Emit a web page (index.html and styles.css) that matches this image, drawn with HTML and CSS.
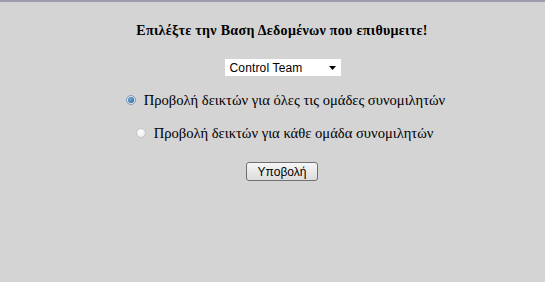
FILE: index.html
```html
<!DOCTYPE html>
<html>
<head>
<meta charset="utf-8">
<link rel="stylesheet" href="styles.css">
</head>
<body>
<div class="topline"></div>
<form class="page">
  <h3 class="title">Επιλέξτε την Βαση Δεδομένων που επιθυμειτε!</h3>
  <div class="select">
    <span class="select-text">Control Team</span>
    <svg class="arrow" width="7" height="4" viewBox="0 0 7 4"><path d="M0 0H7L3.5 4Z" fill="#000"/></svg>
  </div>
  <label class="option first">
    <span class="radio checked"><span class="dot"></span></span>
    <span class="opt-text">Προβολή δεικτών για όλες τις ομάδες συνομιλητών</span>
  </label>
  <label class="option second">
    <span class="radio"></span>
    <span class="opt-text">Προβολή δεικτών για κάθε ομάδα συνομιλητών</span>
  </label>
  <div class="button">Υποβολή</div>
</form>
</body>
</html>
```
FILE: styles.css
```css
html, body {
  margin: 0;
  padding: 0;
  background: #d4d4d4;
  height: 100%;
}
.topline {
  height: 2px;
  background: #9c9cae;
}
.page {
  display: flex;
  flex-direction: column;
  align-items: center;
  padding-left: 19px;
  font-family: "Liberation Serif", "DejaVu Serif", serif;
  color: #000;
}
.title {
  margin: 20px 0 0 0;
  font-size: 14px;
  font-weight: bold;
  line-height: 18px;
  letter-spacing: 0.3px;
}
.select {
  margin-top: 19px;
  width: 116px;
  height: 17px;
  background: #fff;
  display: flex;
  align-items: center;
  justify-content: space-between;
  box-sizing: border-box;
  padding: 0 5px 0 5px;
  margin-left: 1px;
}
.select-text {
  font-family: "Liberation Sans", Arial, sans-serif;
  font-size: 12px;
  letter-spacing: 0.15px;
  color: #000;
}
.arrow {
  display: block;
}
.option {
  display: flex;
  align-items: center;
  font-size: 14.6px;
  line-height: 18px;
}
.option.first {
  margin-top: 15px;
  margin-left: 7px;
}
.option.second {
  margin-top: 15px;
  margin-left: 5px;
}
.opt-text {
  margin-left: 8px;
}
.radio {
  width: 10px;
  height: 10px;
  box-sizing: border-box;
  border-radius: 50%;
  background: radial-gradient(circle at 40% 40%, #ffffff, #e6e6e6);
  border: 1px solid #c6c6c6;
  display: flex;
  align-items: center;
  justify-content: center;
}
.radio.checked {
  border-color: #7d98b8;
  background: #dfe8f2;
}
.dot {
  width: 6px;
  height: 6px;
  border-radius: 50%;
  background: radial-gradient(circle at 40% 40%, #78acd9, #1b4f86);
}
.button {
  margin-top: 20px;
  width: 72px;
  height: 19px;
  box-sizing: border-box;
  border: 1px solid #707070;
  border-radius: 3px;
  background: linear-gradient(#f6f6f6, #dcdcdc);
  font-family: "Liberation Sans", Arial, sans-serif;
  font-size: 12px;
  display: flex;
  align-items: center;
  justify-content: center;
}
```
